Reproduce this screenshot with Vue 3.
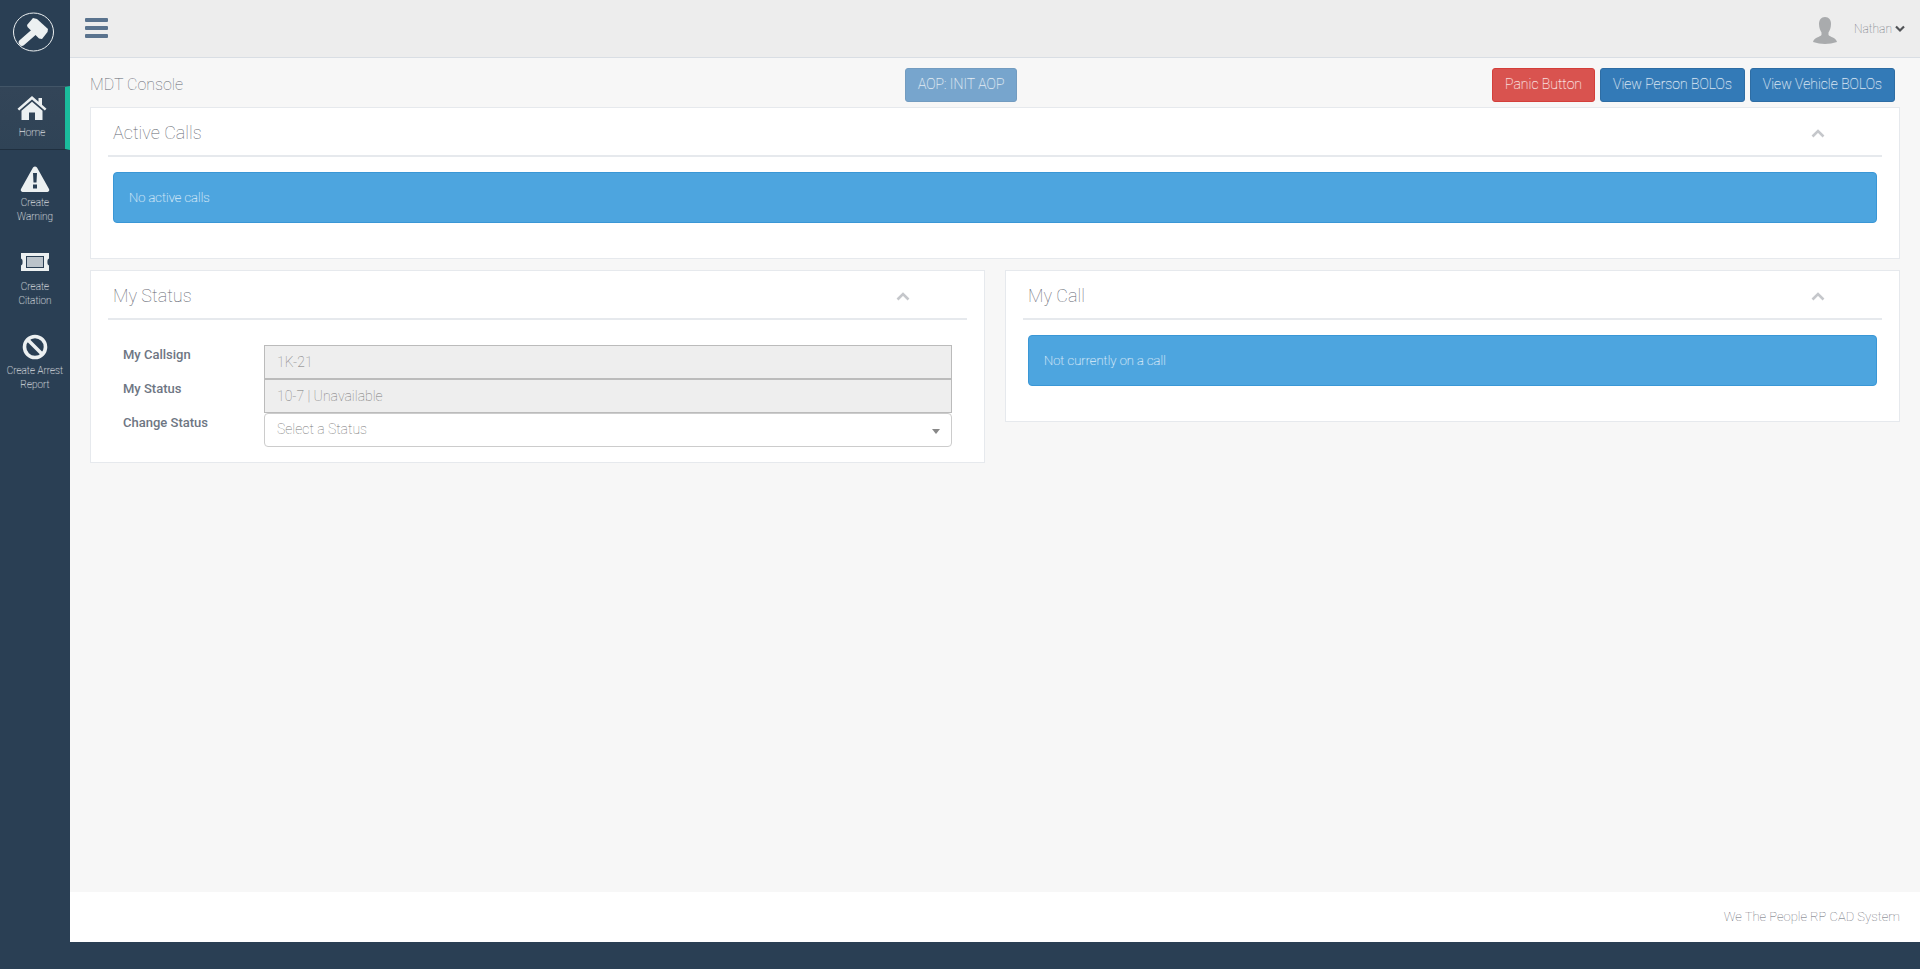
<script setup>
const nav = [
  { id: 'home', lines: ['Home'], active: true },
  { id: 'warn', lines: ['Create', 'Warning'] },
  { id: 'ticket', lines: ['Create', 'Citation'] },
  { id: 'ban', lines: ['Create Arrest', 'Report'] }
]
const buttons = [
  { label: 'Panic Button', cls: 'danger' },
  { label: 'View Person BOLOs', cls: 'primary' },
  { label: 'View Vehicle BOLOs', cls: 'primary' }
]
</script>

<template>
  <div class="app">
    <aside class="side">
      <div class="brand">
        <svg width="44" height="42" viewBox="0 0 44 42">
          <ellipse cx="22.500" cy="21" rx="20" ry="19" fill="none" stroke="#ECF0F1" stroke-width="1" />
          <path fill="#ECF0F1" d="M22 7 L26 8 L37 18 L36.500 21 L31 28 L28 27.500 L16.500 16 L16 14 Z" />
          <path d="M23 21 L11 31.500" stroke="#ECF0F1" stroke-width="6.500" stroke-linecap="round" fill="none" />
        </svg>
      </div>
      <nav class="menu">
        <a v-for="item in nav" :key="item.id" class="item" :class="{ active: item.active }">
          <svg v-if="item.id === 'home'" class="ico" width="30" height="26" viewBox="0 0 30 26">
            <path fill="#ECF0F1" d="M15 1 L21.500 6.800 V3 H25 V9.800 L29.500 13.800 L27.800 15.600 L15 4.400 L2.200 15.600 L.5 13.800 Z M15 6.800 L25.500 15.800 V25 H18 V17.500 H12 V25 H4.500 V15.800 Z" />
          </svg>
          <svg v-else-if="item.id === 'warn'" class="ico" width="30" height="26" viewBox="0 0 30 26">
            <path fill="#ECF0F1" fill-rule="evenodd" d="M13 1.500 Q15 -.5 17 1.500 L29 23 Q30 25.500 27.500 26 H2.500 Q0 25.500 1 23 Z M13 7 L13.500 16.500 H16.500 L17 7 Z M13 18.500 V22.500 H17 V18.500 Z" />
          </svg>
          <svg v-else-if="item.id === 'ticket'" class="ico" width="30" height="26" viewBox="0 0 30 26">
            <path fill="#ECF0F1" fill-rule="evenodd" d="M1 3 H29 V8.500 Q27 9.500 27.500 12 Q27 14.500 29 15.500 V21 H1 V15.500 Q3 14.500 2.500 12 Q3 9.500 1 8.500 Z M6 6 V18 H24 V6 Z" />
            <rect x="7" y="7" width="16" height="10" fill="#ECF0F1" opacity=".75" />
          </svg>
          <svg v-else class="ico" width="30" height="26" viewBox="0 0 30 26">
            <circle cx="15" cy="13" r="10.500" fill="none" stroke="#ECF0F1" stroke-width="3.600" />
            <path d="M8 6 L22 20" stroke="#ECF0F1" stroke-width="3.600" />
          </svg>
          <span v-for="line in item.lines" :key="line" class="line">{{ line }}</span>
        </a>
      </nav>
    </aside>

    <div class="main">
      <header class="top">
        <div class="burger"><i></i><i></i><i></i></div>
        <div class="user">
          <svg width="28" height="28" viewBox="0 0 28 28">
            <path fill="#A9ABAD" d="M14 1 C18 1 20 4 20 8 C20 12 18.500 15 17.500 16.500 V19 C19 21 25 21.500 26 26 Q20 28 14 28 Q8 28 2 26 C3 21.500 9 21 10.500 19 V16.500 C9.500 15 8 12 8 8 C8 4 10 1 14 1 Z" />
          </svg>
          <span class="name">Nathan</span>
          <svg class="caret" width="10" height="8" viewBox="0 0 10 8">
            <path d="M1 1.500 L5 5.500 L9 1.500" fill="none" stroke="#515356" stroke-width="2.200" />
          </svg>
        </div>
      </header>

      <main class="content">
        <div class="title-row">
          <h3 class="page-title">MDT Console</h3>
          <button class="btn aop">AOP: INIT AOP</button>
          <div class="btns">
            <button v-for="b in buttons" :key="b.label" class="btn" :class="b.cls">{{ b.label }}</button>
          </div>
        </div>

        <section class="panel">
          <div class="head">
            <h2>Active Calls</h2>
            <svg class="chev" width="14" height="9" viewBox="0 0 14 9"><path d="M1.500 7.500 L7 2 L12.500 7.500" fill="none" stroke="#C5C7CB" stroke-width="2.600" /></svg>
          </div>
          <div class="body">
            <div class="alert">No active calls</div>
          </div>
        </section>

        <div class="cols">
          <section class="panel status">
            <div class="head">
              <h2>My Status</h2>
              <svg class="chev" width="14" height="9" viewBox="0 0 14 9"><path d="M1.500 7.500 L7 2 L12.500 7.500" fill="none" stroke="#C5C7CB" stroke-width="2.600" /></svg>
            </div>
            <div class="form">
              <label>My Callsign</label>
              <div class="field disabled">1K-21</div>
              <label>My Status</label>
              <div class="field disabled">10-7 | Unavailable</div>
              <label>Change Status</label>
              <div class="field select">Select a Status<span class="arrow"></span></div>
            </div>
          </section>
          <section class="panel">
            <div class="head">
              <h2>My Call</h2>
              <svg class="chev" width="14" height="9" viewBox="0 0 14 9"><path d="M1.500 7.500 L7 2 L12.500 7.500" fill="none" stroke="#C5C7CB" stroke-width="2.600" /></svg>
            </div>
            <div class="body">
              <div class="alert">Not currently on a call</div>
            </div>
          </section>
        </div>
      </main>

      <footer class="foot">We The People RP CAD System</footer>
    </div>
  </div>
</template>

<style>
html, body { margin: 0; background: #2A3F54; }
</style>

<style scoped>
.app {
  display: flex;
  height: 969px;
  overflow: hidden;
  background: #2A3F54;
  font-family: Roboto, "Liberation Sans", sans-serif;
  font-weight: 100;
  font-size: 13px;
  color: #5F6670;
}
.side { width: 70px; flex: none; }
.brand { height: 86px; padding: 11px 0 0 11px; box-sizing: border-box; }
.brand svg { display: block; }
.menu { display: flex; flex-direction: column; }
.item {
  display: flex;
  flex-direction: column;
  align-items: center;
  height: 84px;
  box-sizing: border-box;
  padding-top: 16px;
  color: #FFF;
  font-size: 10px;
  line-height: 14px;
  font-weight: 100;
  text-shadow: 0 0 1px rgba(255, 255, 255, .5);
  text-align: center;
}
.item .ico { margin-bottom: 4px; }
.item.active {
  height: 64px;
  padding: 8px 1px 0 0;
  border-top: 1px solid #425567;
  border-bottom: 1px solid #1F2F3F;
  border-right: 5px solid #1ABB9C;
  background: linear-gradient(#334558, #2F4356);
}
.item.active .ico { margin-bottom: 5px; }
.main { flex: 1; min-width: 0; display: flex; flex-direction: column; background: #2A3F54; margin-bottom: 27px; }
.top {
  height: 58px;
  flex: none;
  box-sizing: border-box;
  background: #EDEDED;
  border-bottom: 1px solid #D9DEE4;
  display: flex;
  align-items: flex-start;
  justify-content: space-between;
}
.burger { margin: 18px 0 0 15px; width: 23px; display: flex; flex-direction: column; gap: 4px; }
.burger i { display: block; height: 4px; border-radius: 1px; background: #5A738E; }
.user { display: flex; align-items: center; margin: 16px 15px 0 0; }
.name { margin: 0 0 2px 15px; font-size: 12px; }
.caret { margin: 0 0 2px 3px; }
.content { flex: 1; background: #F7F7F7; padding: 0 20px; }
.title-row {
  display: grid;
  grid-template-columns: 815px auto 1fr;
  align-items: start;
  height: 49px;
  padding-top: 10px;
  box-sizing: border-box;
}
.page-title { margin: 6px 0 0; font-size: 16px; font-weight: 100; line-height: 22px; }
.btns { display: flex; justify-content: flex-end; gap: 5px; padding-right: 5px; }
.btn {
  height: 34px;
  box-sizing: border-box;
  padding: 0 12px 2px;
  border: 1px solid transparent;
  border-radius: 3px;
  font: 100 14px Roboto, "Liberation Sans", sans-serif;
  color: #FFF;
  text-shadow: 0 0 1px rgba(255, 255, 255, .5);
}
.aop { background: #337AB7; border-color: #2E6DA4; opacity: .65; }
.danger { background: #D9534F; border-color: #D43F3A; }
.primary { background: #337AB7; border-color: #2E6DA4; }
.panel {
  background: #FFF;
  border: 1px solid #E6E9ED;
  padding: 10px 17px;
  box-sizing: border-box;
  align-self: start;
}
.head {
  height: 37px;
  border-bottom: 2px solid #E6E9ED;
  display: flex;
  justify-content: space-between;
  padding: 0 5px;
}
.head h2 { margin: 0; font-size: 18px; line-height: 30px; font-weight: 100; }
.chev { margin: 11px 52px 0 0; }
.body { padding: 15px 5px 25px; }
.alert {
  height: 51px;
  box-sizing: border-box;
  padding: 0 15px;
  line-height: 49px;
  background: rgba(52, 152, 219, .88);
  border: 1px solid #3A97D6;
  border-radius: 4px;
  color: #FFF;
  text-shadow: 0 0 1px rgba(255, 255, 255, .5);
}
.cols { display: grid; grid-template-columns: 1fr 1fr; gap: 20px; margin-top: 11px; }
.form {
  display: grid;
  grid-template-columns: 141px 688px;
  grid-auto-rows: 34px;
  padding: 25px 0 0 15px;
}
.form label { font-weight: 500; font-size: 13px; line-height: 20px; color: #6E7683; }
.field {
  height: 34px;
  box-sizing: border-box;
  border: 1px solid #BBB;
  padding: 0 12px;
  line-height: 32px;
  font-size: 14px;
  color: #777;
  background: #EEE;
  position: relative;
}
.select { background: #FFF; border-radius: 4px; border-color: #CCC; line-height: 30px; }
.arrow {
  position: absolute;
  right: 11px;
  top: 15px;
  border-left: 4px solid transparent;
  border-right: 4px solid transparent;
  border-top: 5px solid #888;
}
.status { height: 193px; }
.foot {
  height: 50px;
  flex: none;
  box-sizing: border-box;
  background: #FFF;
  padding: 15px 20px 0 0;
  text-align: right;
  font-size: 13px;
  line-height: 20px;
}
</style>
